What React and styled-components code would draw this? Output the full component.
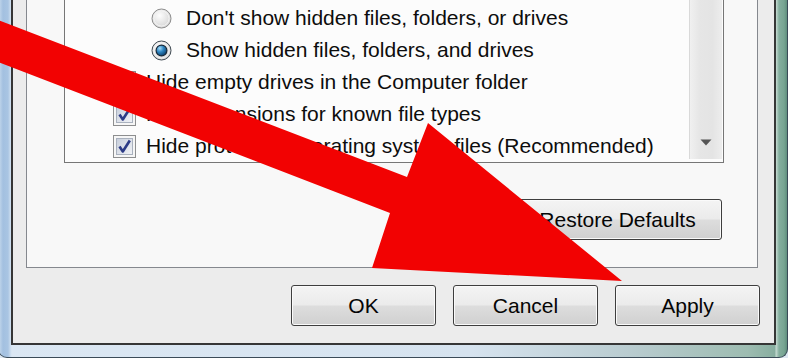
import React from 'react'
import styled, {createGlobalStyle} from 'styled-components'

const GlobalStyle = createGlobalStyle`
  html, body {
    margin: 0;
    padding: 0;
    background: #dfe9f3;
  }
  body {
    font-family: "Liberation Sans", Arial, sans-serif;
  }
`;

const options = [
    {kind: 'radio', checked: false, label: "Don't show hidden files, folders, or drives"},
    {kind: 'radio', checked: true, label: 'Show hidden files, folders, and drives'},
    {kind: 'check', checked: true, label: 'Hide empty drives in the Computer folder'},
    {kind: 'check', checked: true, label: 'Hide extensions for known file types'},
    {kind: 'check', checked: true, label: 'Hide protected operating system files (Recommended)'},
];

const Radio = ({checked}) => (
    <svg width="21" height="21" viewBox="0 0 21 21">
        <defs>
            <radialGradient id="rface" cx="40%" cy="35%" r="70%">
                <stop offset="0" stopColor="#fdfdfd"/>
                <stop offset="1" stopColor="#d3d3d3"/>
            </radialGradient>
            <radialGradient id="rdot" cx="35%" cy="30%" r="75%">
                <stop offset="0" stopColor="#a6dcf8"/>
                <stop offset="0.45" stopColor="#2f86c2"/>
                <stop offset="1" stopColor="#0c3f6a"/>
            </radialGradient>
        </defs>
        <circle cx="10.5" cy="10.5" r="9.5" fill="url(#rface)" stroke={checked ? '#3f4a52' : '#8c8c8c'}/>
        <circle cx="10.5" cy="10.5" r="7.6" fill="none" stroke="#f4f4f4"/>
        {checked && <circle cx="10.5" cy="10.5" r="5.4" fill="url(#rdot)" stroke="#16293a" strokeWidth="1.2"/>}
    </svg>
);

const Check = ({checked}) => (
    <svg width="23" height="23" viewBox="0 0 23 23">
        <defs>
            <linearGradient id="cface" x1="0" y1="0" x2="1" y2="1">
                <stop offset="0" stopColor="#c7cedb"/>
                <stop offset="1" stopColor="#f1f3f7"/>
            </linearGradient>
        </defs>
        <rect x="0.5" y="0.5" width="22" height="22" fill="#f6f6f6" stroke="#8d8e8f"/>
        <rect x="3.5" y="3.5" width="16" height="16" fill="url(#cface)" stroke="#a9b1be"/>
        {checked && <path d="M6.5 11.5 L9.8 16.5 L16.8 5.5" fill="none" stroke="#2c3b86" strokeWidth="2.6" strokeLinejoin="round"/>}
    </svg>
);

//red pointer laid over the dialog
const ArrowOverlay = () => (
    <Overlay viewBox="0 0 788 358">
        <polygon points="-20,13 407,177 428,123 622,281 372,268 390,213 -20,55" fill="#f20202"/>
    </Overlay>
);

const App = () => {
    return (
        <Screen>
            <GlobalStyle/>
            <Glass>
                <Face>
                    <TabPage>
                        <ListBox>
                            <Items>
                                {options.map((o) => (
                                    <Row key={o.label} $indent={o.kind === 'radio' ? 86 : 48}>
                                        {o.kind === 'radio' ? <Radio checked={o.checked}/> : <Check checked={o.checked}/>}
                                        <Label $gap={o.kind === 'radio' ? 14 : 10}>{o.label}</Label>
                                    </Row>
                                ))}
                            </Items>
                            <ScrollBar>
                                <svg width="12" height="7" viewBox="0 0 12 7">
                                    <path d="M0.5 0.5 H11.5 L6 6.5 Z" fill="#555"/>
                                    <path d="M1 0.5 H11" stroke="#9a9a9a"/>
                                </svg>
                            </ScrollBar>
                        </ListBox>
                        <RestoreRow>
                            <Button $w={209}>Restore Defaults</Button>
                        </RestoreRow>
                    </TabPage>
                    <ButtonBar>
                        <Button>OK</Button>
                        <Button>Cancel</Button>
                        <Button>Apply</Button>
                    </ButtonBar>
                </Face>
            </Glass>
            <ArrowOverlay/>
        </Screen>
    );
};

const Screen = styled.div`
position: relative;
width: 788px;
height: 358px;
overflow: hidden;
`;

const Overlay = styled.svg`
position: absolute;
left: 0;
top: 0;
width: 788px;
height: 358px;
pointer-events: none;
`;

const Glass = styled.div`
box-sizing: border-box;
width: 790px;
height: 358px;
margin-left: -2px;
padding: 0 11px 12px 12px;
border: 1px solid #3b4b58;
border-top: none;
border-radius: 0 0 9px 9px;
background:
    linear-gradient(90deg, #c4d8ec 0px, #a3c0e0 4px, #a9c5e3 9px, #d3e2f1 12px, transparent 13px),
    linear-gradient(270deg, #5f8f7d 0px, #78a593 3px, #84ae9e 8px, #c6dbd2 11px, transparent 12px),
    linear-gradient(90deg, #dbe7f3 0%, #d6e3ef 60%, #b9ccd0 80%, #9dbcb1 95%, #7ea898 100%);
`;

const Face = styled.div`
box-sizing: border-box;
height: 345px;
border: 2px solid #363636;
border-top: none;
background: #ececec;
`;

const TabPage = styled.div`
box-sizing: border-box;
height: 268px;
margin: 0 16px 0 13px;
border: 1px solid #85888e;
border-top: none;
background: #f8f8f8;
display: flex;
flex-direction: column;
`;

const ListBox = styled.div`
box-sizing: border-box;
height: 163px;
margin: 0 33px 0 37px;
border: 1px solid #767676;
border-top: none;
background: #fcfcfc;
display: flex;
overflow: hidden;
`;

const Items = styled.div`
flex: 1;
padding-top: 2px;
`;

const Row = styled.div`
display: flex;
align-items: center;
height: 32px;
padding-left: ${p => p.$indent}px;
`;

const Label = styled.span`
margin-left: ${p => p.$gap}px;
font-size: 21px;
color: #0d0d0d;
white-space: nowrap;
`;

const ScrollBar = styled.div`
box-sizing: border-box;
width: 33px;
margin: 0 1px 3px 0;
border-left: 1px solid #d9d9d9;
background: linear-gradient(90deg, #f0f0f0, #e6e6e6 30%, #e4e4e4 70%, #ededed);
display: flex;
flex-direction: column;
justify-content: flex-end;
align-items: center;
padding-bottom: 13px;
`;

const RestoreRow = styled.div`
display: flex;
justify-content: flex-end;
margin-top: 36px;
padding-right: 35px;
`;

const ButtonBar = styled.div`
display: flex;
justify-content: flex-end;
gap: 17px;
padding: 17px 14px 0 0;
`;

const Button = styled.button`
box-sizing: border-box;
width: ${p => p.$w || 145}px;
height: 41px;
padding: 0;
border: 1px solid #3e3e3e;
border-radius: 3px;
background: linear-gradient(#f4f4f4 0%, #ebebeb 48%, #dddddd 52%, #d0d0d0 100%);
box-shadow: inset 0 0 0 1px #fafafa;
font-family: "Liberation Sans", Arial, sans-serif;
font-size: 21px;
color: #050505;
`;

export default App;
